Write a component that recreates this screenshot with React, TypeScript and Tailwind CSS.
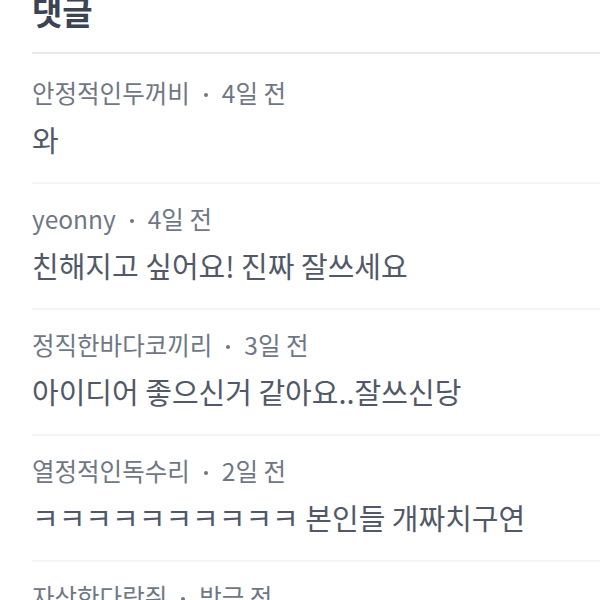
const comments = [
  { name: "안정적인두꺼비", time: "4일 전", text: "와" },
  { name: "yeonny", time: "4일 전", text: "친해지고 싶어요! 진짜 잘쓰세요" },
  { name: "정직한바다코끼리", time: "3일 전", text: "아이디어 좋으신거 같아요..잘쓰신당" },
  { name: "열정적인독수리", time: "2일 전", text: "ㅋㅋㅋㅋㅋㅋㅋㅋㅋㅋ 본인들 개짜치구연" },
  { name: "자상한다람쥐", time: "방금 전", text: "좋아요" },
];

export default function App() {
  return (
    <div
      className="w-[600px] h-[600px] overflow-hidden bg-white pl-[32px]"
      style={{ fontFamily: '"Noto Sans CJK KR", "Noto Sans", sans-serif' }}
    >
      {/* Header */}
      <div className="-mt-[8px] pb-[22px] border-b-2 border-[#e6e9ef]">
        <h2 className="text-[33px] leading-[38px] font-bold text-[#3c4453]">댓글</h2>
      </div>

      {/* Comments */}
      <ul>
        {comments.map((c, i) => (
          <li
            key={i}
            className={`pb-[25px] border-b-2 border-[#f4f5f7] ${i === 0 ? "pt-[24px]" : "pt-[20px]"}`}
          >
            <div className="flex items-center text-[24.5px] leading-[30px] text-[#6f7785]">
              <span>{c.name}</span>
              <span className="mx-[14px] mt-[3px] w-[4px] h-[4px] rounded-full bg-[#6f7785]" />
              <span>{c.time}</span>
            </div>
            <p className="mt-[13px] text-[29px] leading-[36px] text-[#515968]">{c.text}</p>
          </li>
        ))}
      </ul>
    </div>
  );
}
